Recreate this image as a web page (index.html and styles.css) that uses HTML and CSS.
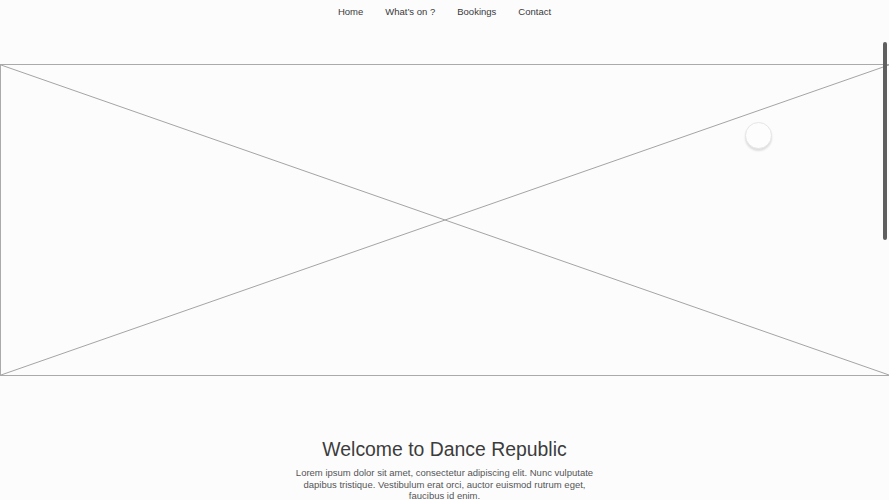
FILE: index.html
```html
<!DOCTYPE html>
<html>
<head>
<meta charset="utf-8">
<link rel="stylesheet" href="styles.css">
</head>
<body>
<nav class="nav">
  <a class="nav-link" href="#">Home</a>
  <a class="nav-link" href="#">What’s on ?</a>
  <a class="nav-link" href="#">Bookings</a>
  <a class="nav-link" href="#">Contact</a>
</nav>
<section class="hero">
  <svg class="hero-x" viewBox="0 0 100 100" preserveAspectRatio="none">
    <line x1="0" y1="0" x2="100" y2="100" vector-effect="non-scaling-stroke"/>
    <line x1="100" y1="0" x2="0" y2="100" vector-effect="non-scaling-stroke"/>
  </svg>
  <span class="hero-dot"></span>
</section>
<section class="intro">
  <h1 class="intro-title">Welcome to Dance Republic</h1>
  <p class="intro-text">Lorem ipsum dolor sit amet, consectetur adipiscing elit. Nunc vulputate dapibus tristique. Vestibulum erat orci, auctor euismod rutrum eget, faucibus id enim.</p>
</section>
<div class="scroll-thumb"></div>
</body>
</html>
```
FILE: styles.css
```css
html, body {
  margin: 0;
  padding: 0;
  background: #fcfcfd;
  font-family: "Liberation Sans", Arial, sans-serif;
  overflow: hidden;
}
.nav {
  display: flex;
  justify-content: center;
  gap: 22px;
  padding-top: 6px;
  height: 64px;
  box-sizing: border-box;
}
.nav-link {
  font-size: 9.5px;
  color: #3a3a3a;
  text-decoration: none;
  line-height: 12px;
}
.hero {
  position: relative;
  height: 312px;
  border: 1px solid #aaaaaa;
  border-right: 0;
  box-sizing: border-box;
}
.hero-x {
  position: absolute;
  inset: 0;
  width: 100%;
  height: 100%;
}
.hero-x line {
  stroke: #a4a4a4;
  stroke-width: 1;
}
.hero-dot {
  position: absolute;
  left: 744px;
  top: 57px;
  width: 27px;
  height: 27px;
  border-radius: 50%;
  background: #fdfdfd;
  border: 1px solid #e6e6e6;
  box-shadow: 0 2px 2px rgba(0,0,0,0.12);
  box-sizing: border-box;
}
.intro {
  display: flex;
  flex-direction: column;
  align-items: center;
  padding-top: 61px;
}
.intro-title {
  margin: 0;
  font-weight: normal;
  font-size: 19.4px;
  line-height: 24px;
  color: #3c3c3c;
}
.intro-text {
  margin: 6px 0 0;
  width: 305px;
  text-align: center;
  font-size: 9.5px;
  line-height: 11.5px;
  color: #555555;
}
.scroll-thumb {
  position: fixed;
  right: 2px;
  top: 42px;
  width: 4px;
  height: 198px;
  border-radius: 2px;
  background: #5f5f5f;
}
```
